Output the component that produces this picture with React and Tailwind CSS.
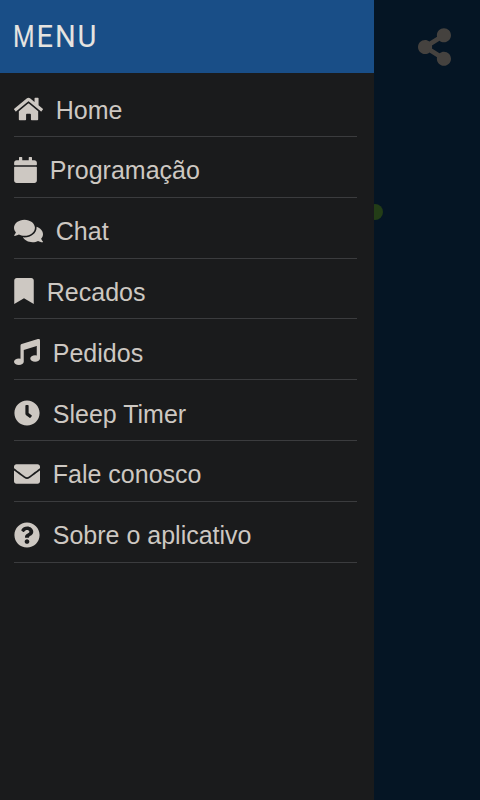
import React from 'react';
import {
    FaHome,
    FaCalendar,
    FaComments,
    FaBookmark,
    FaMusic,
    FaClock,
    FaEnvelope,
    FaQuestionCircle,
    FaShareAlt,
} from 'react-icons/fa';

const items = [
    { label: 'Home', icon: FaHome, width: 'w-[29px]' },
    { label: 'Programação', icon: FaCalendar, width: 'w-[23px]' },
    { label: 'Chat', icon: FaComments, width: 'w-[29px]' },
    { label: 'Recados', icon: FaBookmark, width: 'w-[20px]' },
    { label: 'Pedidos', icon: FaMusic, width: 'w-[26px]' },
    { label: 'Sleep Timer', icon: FaClock, width: 'w-[26px]' },
    { label: 'Fale conosco', icon: FaEnvelope, width: 'w-[26px]' },
    { label: 'Sobre o aplicativo', icon: FaQuestionCircle, width: 'w-[26px]' },
];

function MenuItem({ label, icon: Icon, width }) {
    return (
        <li className="h-[60.8px] border-b border-[#3b3c3e] flex items-end pb-[12.4px]">
            <button className="flex items-center h-[28px] text-[25px] leading-[28px] whitespace-nowrap">
                <Icon className={`${width} h-[26px] mr-[13.2px] mb-[1px] shrink-0`} />
                <span>{label}</span>
            </button>
        </li>
    );
}

export default function App() {
    return (
        <div className="relative w-[480px] h-[800px] overflow-hidden flex bg-[#051524] font-['Liberation_Sans',Arial,sans-serif]">
            <aside className="w-[374px] shrink-0 h-full bg-[#1a1b1c] text-[#cdc8c2] z-10">
                <header className="h-[73px] bg-[#194e87] pl-[13px] pb-[1px] flex items-center text-[#e5e3e0]">
                    <h1 className="font-[Roboto,sans-serif] font-normal text-[32px] leading-none tracking-[2px] flex origin-left scale-x-[0.91]">
                        <span className="inline-block origin-left scale-x-[0.85] -mr-[4px]">M</span>
                        <span>ENU</span>
                    </h1>
                </header>
                <ul className="ml-[13.6px] mr-[17px] pt-[3.2px]">
                    {items.map((item) => (
                        <MenuItem key={item.label} {...item} />
                    ))}
                </ul>
            </aside>
            <div className="grow flex justify-end pt-[28px] pr-[29px]">
                <FaShareAlt className="w-[33px] h-[38px] text-[#45423f]" />
            </div>
            {/* status dot peeking out from behind the drawer */}
            <div className="absolute left-[367px] top-[204px] w-[16px] h-[16px] rounded-full bg-[#233d17]" />
        </div>
    );
}
